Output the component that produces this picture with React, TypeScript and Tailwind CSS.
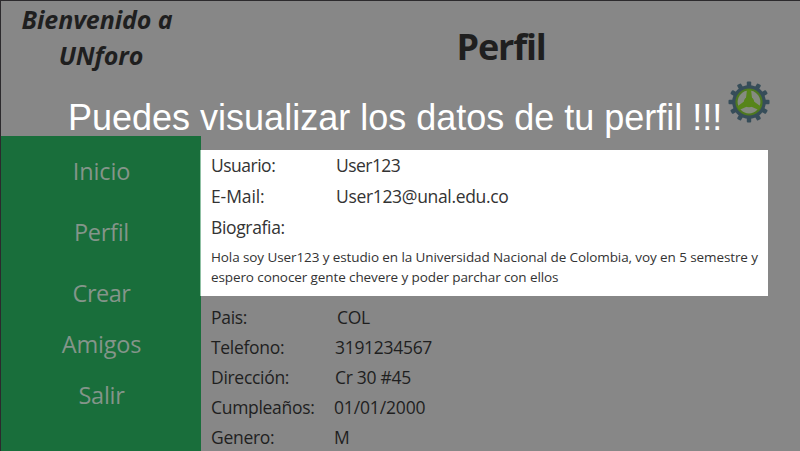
const ui = "font-['Open_Sans','Noto_Sans',sans-serif]";

const menu = [
  { label: "Inicio", box: "h-[61px] tracking-[-0.1px]" },
  { label: "Perfil", box: "h-[61px] tracking-[-0.3px]" },
  { label: "Crear", box: "h-[61px] tracking-[-0.5px]" },
  { label: "Amigos", box: "h-[41px] tracking-[-0.2px]" },
  { label: "Salir", box: "h-[61px] tracking-[-0.3px]" },
];

const account = [
  { label: "Usuario:", value: "User123", l: "tracking-[-0.5px]", v: "tracking-[-0.55px]" },
  { label: "E-Mail:", value: "User123@unal.edu.co", l: "tracking-[-0.1px]", v: "tracking-[-0.33px]" },
  { label: "Biografia:", value: "", l: "tracking-[-0.35px]", v: "" },
];

const details = [
  { label: "Pais:", value: "COL", v: "pl-px" },
  { label: "Telefono:", value: "3191234567", v: "-ml-px" },
  { label: "Dirección:", value: "Cr 30 #45", v: "-ml-px" },
  { label: "Cumpleaños:", value: "01/01/2000", v: "-ml-0.5 tracking-[-0.15px]" },
  { label: "Genero:", value: "M", v: "-ml-0.5" },
];

function Gear() {
  const teeth = Array.from({ length: 12 }, (_, i) => i * 30);
  const spokes = [0, 120, 240];
  return (
    <svg viewBox="-21 -21 42 42" className="size-[42px]">
      <g fill="#364d59">
        {teeth.map((a) => (
          <rect key={a} x="-2.2" y="-20.5" width="4.4" height="7" rx="1" transform={`rotate(${a})`} />
        ))}
        <circle r="16.8" />
      </g>
      <circle r="13.6" fill="#4d7820" />
      <circle r="11.4" fill="#858b80" />
      <g fill="#57851a">
        {spokes.map((a) => (
          <path key={a} d="M-2-12.5H2L3-4L4.8 1H-4.8L-3-4Z" transform={`rotate(${a})`} />
        ))}
        <circle r="5.2" />
      </g>
    </svg>
  );
}

export default function App() {
  return (
    <div className={`relative flex h-[451px] w-[800px] overflow-hidden border-t border-l border-[#2c2a2d] bg-[#878787] text-[#1f1f1f] ${ui}`}>
      <aside className="flex w-[200px] shrink-0 flex-col">
        <h2 className="h-[135px] pr-2 text-center text-[25px] leading-9 font-bold italic tracking-[-0.1px] whitespace-nowrap">
          Bienvenido a
          <br />
          <span className="pl-2">UNforo</span>
        </h2>
        <nav className="flex flex-1 flex-col items-center bg-[#196e3b] pt-[5px] pl-px text-[23.5px] text-[#84958a]">
          {menu.map((m) => (
            <a key={m.label} className={`flex items-center ${m.box}`}>
              {m.label}
            </a>
          ))}
        </nav>
      </aside>

      <main className="flex flex-1 flex-col">
        <header className="flex h-[149px] shrink-0 flex-col">
          <h1 className="h-20 pt-[21px] pl-px text-center text-[36px] leading-[50px] font-bold tracking-[-1.2px]">Perfil</h1>
          <div className="flex justify-end pr-[30px]">
            <Gear />
          </div>
        </header>

        <section className="-ml-px h-[146px] w-[568px] shrink-0 border-l border-[#8fc0a3] bg-white pl-[10px] text-[#333]">
          {account.map((r) => (
            <div key={r.label} className="flex h-[31px] items-center text-[17.5px]">
              <span className={`w-[125px] ${r.l}`}>{r.label}</span>
              <span className={r.v}>{r.value}</span>
            </div>
          ))}
          <p className="pt-1 text-[13.5px] leading-5 tracking-[-0.1px] whitespace-nowrap">
            Hola soy User123 y estudio en la Universidad Nacional de Colombia, voy en 5 semestre y
            <br />
            espero conocer gente chevere y poder parchar con ellos
          </p>
        </section>

        <section className="pt-[5.6px] pl-[10px] text-[17.5px]">
          {details.map((r) => (
            <div key={r.label} className="flex h-[30.2px] items-center tracking-[-0.3px]">
              <span className="w-[125px]">{r.label}</span>
              <span className={r.v}>{r.value}</span>
            </div>
          ))}
        </section>
      </main>

      <p className="absolute top-[96px] left-[67px] font-['Liberation_Sans',Arial,sans-serif] text-[36px] leading-[42px] whitespace-nowrap text-white">
        Puedes visualizar los datos de tu perfil !!!
      </p>
    </div>
  );
}
